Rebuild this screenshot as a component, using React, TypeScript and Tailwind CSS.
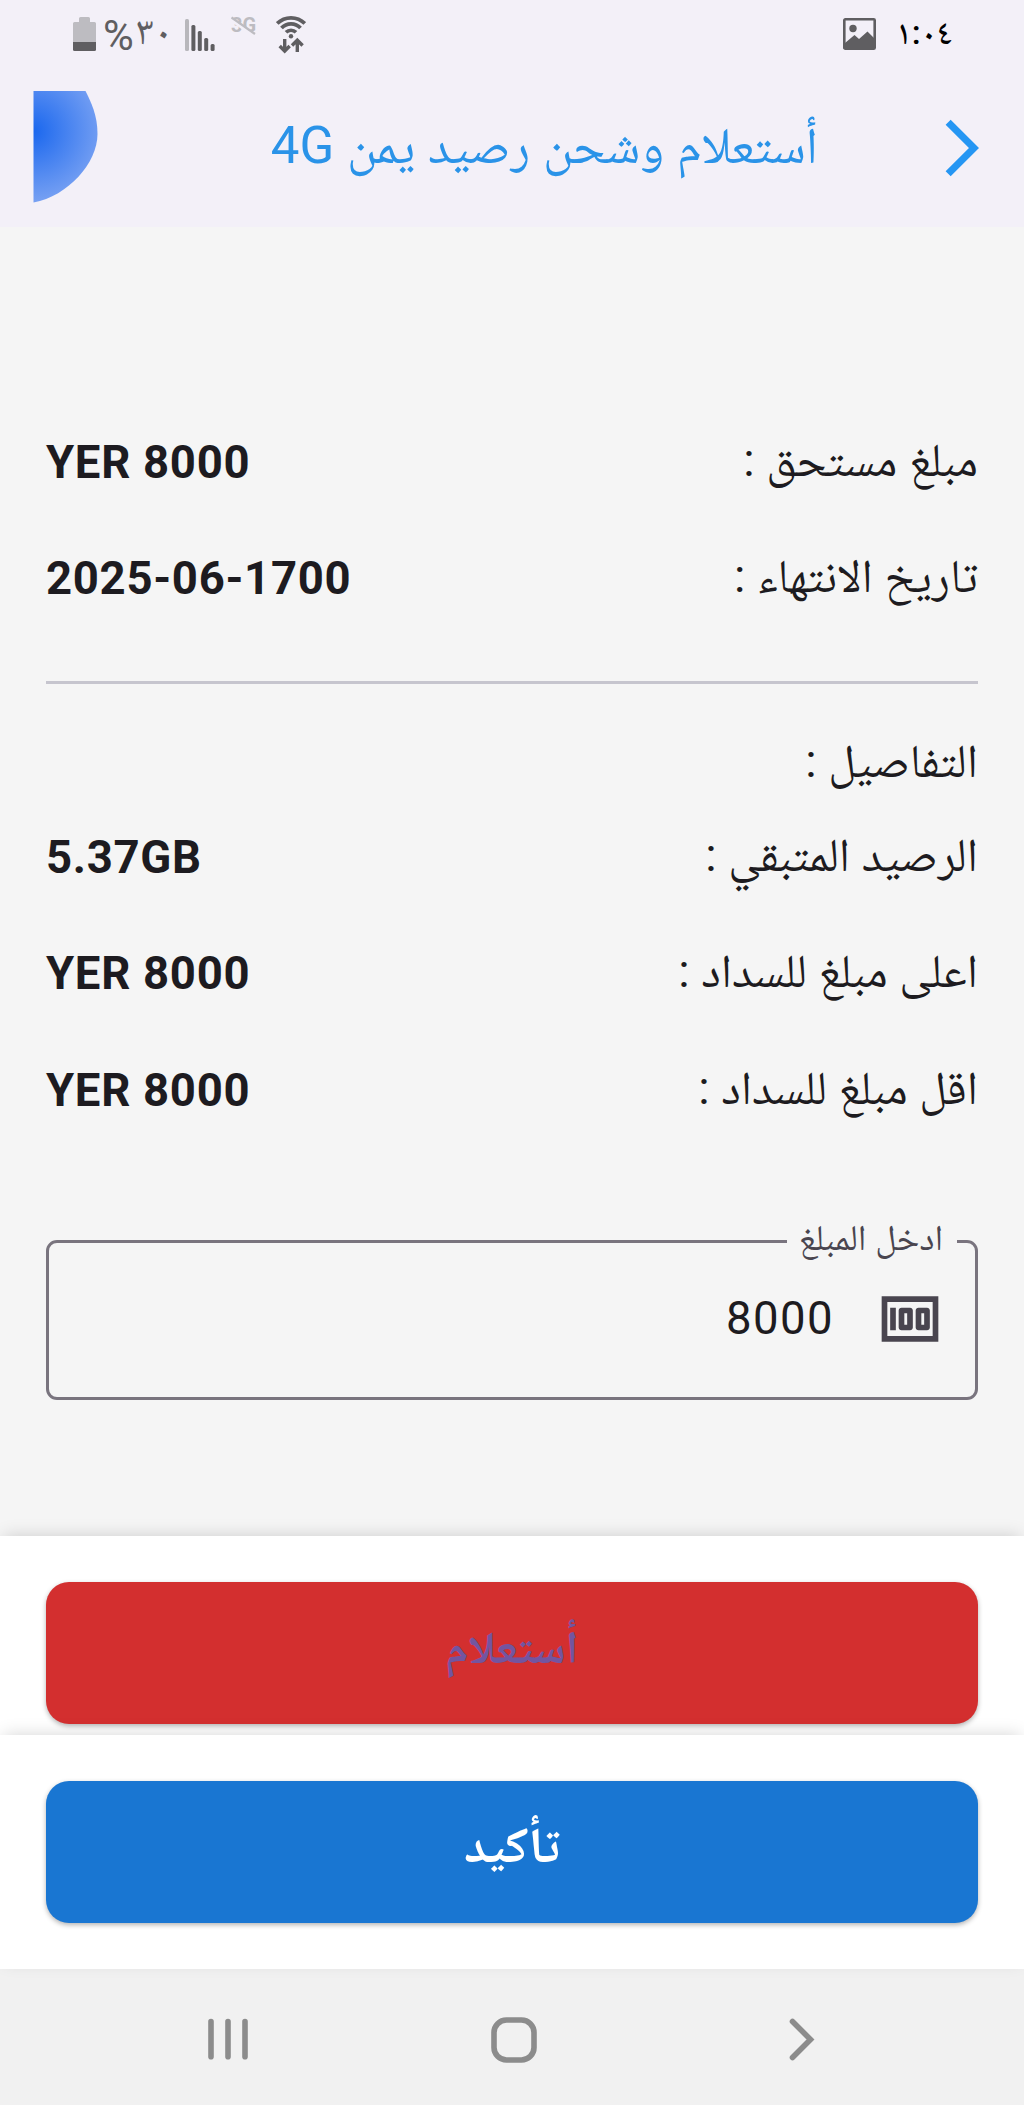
import { MdArrowForwardIos, MdMoney } from "react-icons/md";

const dues = [
  { label: "مبلغ مستحق :", value: "YER 8000" },
  { label: "تاريخ الانتهاء :", value: "2025-06-1700" },
];

const details = [
  { label: "الرصيد المتبقي :", value: "5.37GB" },
  { label: "اعلى مبلغ للسداد :", value: "YER 8000" },
  { label: "اقل مبلغ للسداد :", value: "YER 8000" },
];

const BatteryIcon = () => (
  <svg width="23" height="34" viewBox="0 0 23 34">
    <path d="M6 5V1.500Q6 0 7.500 0H15.500Q17 0 17 1.500V5H21.500Q23 5 23 6.500V25H0V6.500Q0 5 1.500 5Z" fill="#bdbcc1" />
    <path d="M0 25H23V32.500Q23 34 21.500 34H1.500Q0 34 0 32.500Z" fill="#5f5e61" />
  </svg>
);

const SignalIcon = () => (
  <svg width="30" height="32" viewBox="0 0 30 32">
    <rect x="0" y="0" width="4" height="32" rx="1.500" fill="#b8b7bc" />
    <rect x="6.400" y="6" width="4" height="26" rx="1.500" fill="#5f5e61" />
    <rect x="12.800" y="12" width="4" height="20" rx="1.500" fill="#5f5e61" />
    <rect x="19.200" y="19" width="4" height="13" rx="1.500" fill="#5f5e61" />
    <rect x="25.600" y="25" width="4" height="7" rx="1.500" fill="#5f5e61" />
  </svg>
);

const WifiIcon = () => (
  <svg width="30" height="39" viewBox="0 0 30 39" fill="none" stroke="#5f5e61">
    <path d="M1.200 8.500A19.500 19.500 0 0 1 28.800 8.500" strokeWidth="3.800" />
    <path d="M5.500 13A13 13 0 0 1 24.500 13" strokeWidth="3.800" />
    <path d="M10 17.300A7 7 0 0 1 20 17.300" strokeWidth="3.600" />
    <circle cx="15" cy="21.300" r="2.200" fill="#5f5e61" stroke="none" />
    <path d="M8.700 24V36M3.700 31L8.700 36L13.700 31" strokeWidth="3.400" />
    <path d="M21.300 37V25.500M16 30.500L21.300 25.200L26.600 30.500" strokeWidth="3.400" />
  </svg>
);

const PictureIcon = () => (
  <svg width="33" height="32" viewBox="0 0 33 32">
    <rect x="1.300" y="1.300" width="30.400" height="29.400" rx="1" fill="none" stroke="#5f5e61" strokeWidth="2.600" />
    <circle cx="10" cy="10.500" r="3.700" fill="#5f5e61" />
    <path d="M2 25L11.500 17L16 21L24.500 13.500L31 20V31H2Z" fill="#5f5e61" />
  </svg>
);

const StatusBar = () => (
  <div className="flex h-[68px] items-start justify-between pt-[15px] pr-[76px] pl-[73px]">
    <div className="flex items-start text-[#5f5e61]">
      <div className="mt-[2px]">
        <BatteryIcon />
      </div>
      <span className="ml-[7px] w-[30px] text-[42px] leading-[41px]">%</span>
      <span className="ml-[3px] w-[42px] text-[40px] leading-[32px]">٣٠</span>
      <div className="mt-[4px] ml-[7px]">
        <SignalIcon />
      </div>
      <div className="relative ml-4 h-[20px] w-[26px] text-[20px] font-bold leading-[20px] text-[#bdbcc1]">
        3G
        <svg className="absolute top-0 left-0" width="26" height="21" viewBox="0 0 26 21">
          <path d="M0 5L24 21.500" stroke="#f3f0f8" strokeWidth="3" />
          <path d="M0.500 2.500L24 19" stroke="#bdbcc1" strokeWidth="2.200" />
        </svg>
      </div>
      <div className="ml-[19px]">
        <WifiIcon />
      </div>
    </div>
    <div className="flex items-start">
      <div className="mt-[3px] mr-[20px]">
        <PictureIcon />
      </div>
      <span className="w-[52px] text-[34px] font-medium leading-[35px] text-black">١:٠٤</span>
    </div>
  </div>
);

const Header = () => (
  <header className="h-[227px] bg-[#f3f0f8]">
    <StatusBar />
    <div className="flex h-[159px] items-start justify-between pr-[28px] pl-[33px]">
      <svg className="mt-[23px]" width="66" height="112" viewBox="0 0 66 112">
        <defs>
          <radialGradient id="ball" gradientUnits="userSpaceOnUse" cx="0" cy="40" r="74">
            <stop offset="0" stopColor="#1a67ee" />
            <stop offset="1" stopColor="#7ba3f3" />
          </radialGradient>
        </defs>
        <path d="M0.500 0H52.500C58 11 64.500 24 64.500 43C64.500 72 35 105 0.500 111.500Z" fill="url(#ball)" />
      </svg>
      <div className="flex items-start">
        <h1 dir="rtl" className="mt-[50px] mr-[110px] whitespace-nowrap text-[51px] leading-[56px] text-[#2a93e8]">
          أستعلام وشحن رصيد يمن 4G
        </h1>
        <MdArrowForwardIos className="mt-[46px] size-[68px] text-[#2596f3]" />
      </div>
    </div>
  </header>
);

const Row = ({ label, value }: { label: string; value: string }) => (
  <div className="flex h-[116.6px] items-center justify-between">
    <span className="pb-[5px] text-[47px] leading-[56px]">{label}</span>
    <span dir="ltr" className="pt-px text-[45.5px] font-bold leading-[56px] tracking-[0.7px]">
      {value}
    </span>
  </div>
);

const AmountField = () => (
  <fieldset className="mt-[73px] h-[178px] rounded-[11px] border-[3px] border-[#79747e] pr-[18px]">
    <legend className="h-[40px] pr-[14px] pb-[7px] pl-[12px] text-[36px] leading-[33px] text-[#49454f]">
      ادخل المبلغ
    </legend>
    <div className="flex items-center gap-[42px] pt-[23px] pr-[13px]">
      <MdMoney className="size-[68px] text-[#49454f]" />
      <span dir="ltr" className="text-[45.5px] leading-[56px] tracking-[1.4px]">
        8000
      </span>
    </div>
  </fieldset>
);

const NavBar = () => (
  <nav dir="ltr" className="flex h-[136px] items-center bg-[#f1f1f1] pt-[5px] pl-[208px]">
    <svg width="40" height="46" viewBox="0 0 40 46" stroke="#8c8c8c" strokeWidth="5.600" strokeLinecap="round">
      <path d="M3 4.500V39.800M20 4.500V39.800M37 4.500V39.800" />
    </svg>
    <svg className="ml-[243px]" width="46" height="46" viewBox="0 0 46 46" fill="none" stroke="#8c8c8c" strokeWidth="5.600">
      <rect x="3" y="3" width="40" height="40" rx="12.500" />
    </svg>
    <svg className="ml-[250px]" width="28" height="46" viewBox="0 0 28 46" fill="none" stroke="#8c8c8c" strokeWidth="5.600" strokeLinecap="round">
      <path d="M5.500 4.500L23.500 22.500L5.500 40.500" />
    </svg>
  </nav>
);

export default function App() {
  return (
    <div className="flex h-[2105px] w-[1024px] flex-col overflow-hidden bg-[#f5f5f5] font-[Roboto,'Noto_Naskh_Arabic','DejaVu_Sans',sans-serif] text-[#1d1b20]">
      <Header />
      <main dir="rtl" className="h-[1309px] px-[46px] pt-[177px]">
        {dues.map((row) => (
          <Row key={row.label} {...row} />
        ))}
        <div className="mt-[43.8px] h-[3px] bg-[#c6c5ce]" />
        <p className="h-[115px] pt-[49px] text-[47px] leading-[56px]">التفاصيل :</p>
        {details.map((row) => (
          <Row key={row.label} {...row} />
        ))}
        <AmountField />
      </main>
      <div className="relative h-[199px] bg-white px-[46px] pt-[46px] shadow-[0_-4px_16px_-4px_rgba(0,0,0,0.17)]">
        <button className="h-[142px] w-full rounded-[23px] bg-[#d32f2f] pb-[10px] text-[45.5px] font-bold text-[#7355a0] shadow-[0_2px_5px_rgba(0,0,0,0.3)]">
          أستعلام
        </button>
      </div>
      <div className="relative h-[234px] bg-white px-[46px] pt-[46px] shadow-[0_-4px_16px_-4px_rgba(0,0,0,0.17)]">
        <button className="h-[142px] w-full rounded-[23px] bg-[#1976d2] pb-[14px] text-[50px] font-bold text-white shadow-[0_2px_5px_rgba(0,0,0,0.3)]">
          تأكيد
        </button>
      </div>
      <NavBar />
    </div>
  );
}
